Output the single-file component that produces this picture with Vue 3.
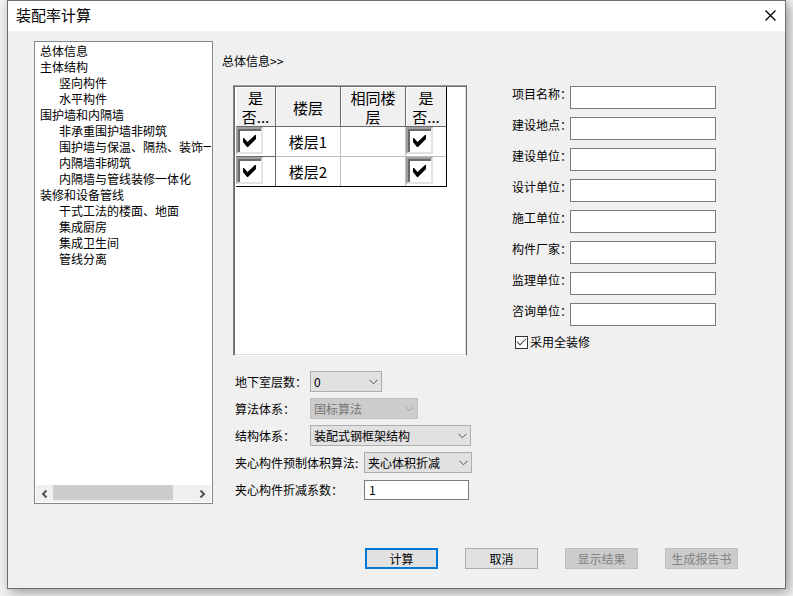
<script setup>
import { ref } from 'vue'

const tree = [
  { text: '总体信息', level: 0 },
  { text: '主体结构', level: 0 },
  { text: '竖向构件', level: 1 },
  { text: '水平构件', level: 1 },
  { text: '围护墙和内隔墙', level: 0 },
  { text: '非承重围护墙非砌筑', level: 1 },
  { text: '围护墙与保温、隔热、装饰一体化', level: 1 },
  { text: '内隔墙非砌筑', level: 1 },
  { text: '内隔墙与管线装修一体化', level: 1 },
  { text: '装修和设备管线', level: 0 },
  { text: '干式工法的楼面、地面', level: 1 },
  { text: '集成厨房', level: 1 },
  { text: '集成卫生间', level: 1 },
  { text: '管线分离', level: 1 },
]

const floors = ref([
  { name: '楼层1', same: '', first: true, second: true },
  { name: '楼层2', same: '', first: true, second: true },
])

const selects = [
  { id: 'basement', label: '地下室层数：', value: '0', size: 'small' },
  { id: 'method', label: '算法体系：', value: '国标算法', size: 'medium', disabled: true },
  { id: 'structure', label: '结构体系：', value: '装配式钢框架结构', size: 'large' },
  { id: 'volume', label: '夹心构件预制体积算法:', value: '夹心体积折减', size: 'medium', wide: true },
]

const factor = ref('1')

const fields = ref([
  { id: 'project', label: '项目名称：', value: '' },
  { id: 'place', label: '建设地点：', value: '' },
  { id: 'owner', label: '建设单位：', value: '' },
  { id: 'designer', label: '设计单位：', value: '' },
  { id: 'builder', label: '施工单位：', value: '' },
  { id: 'factory', label: '构件厂家：', value: '' },
  { id: 'supervisor', label: '监理单位：', value: '' },
  { id: 'consultant', label: '咨询单位：', value: '' },
])

const fullDecoration = ref(true)
</script>

<template>
  <div class="desktop">
    <main class="dialog">
      <header class="titlebar">
        <h1>装配率计算</h1>
        <button class="close" type="button" aria-label="关闭">
          <svg width="11" height="11" viewBox="0 0 11 11"><path d="M.5 .5 10.5 10.5M10.5 .5 .5 10.5" /></svg>
        </button>
      </header>

      <div class="content">
        <nav class="tree">
          <ul>
            <li v-for="item in tree" :key="item.text" :class="{ child: item.level }">{{ item.text }}</li>
          </ul>
          <div class="scrollbar">
            <button type="button" aria-label="向左">
              <svg width="7" height="8" viewBox="0 0 7 8"><path d="M5.5 .5 2 4 5.5 7.5" /></svg>
            </button>
            <div class="track"><div class="thumb"></div></div>
            <button type="button" aria-label="向右">
              <svg width="7" height="8" viewBox="0 0 7 8"><path d="M1.5 .5 5 4 1.5 7.5" /></svg>
            </button>
          </div>
        </nav>

        <section class="middle">
          <h2>总体信息&gt;&gt;</h2>
          <div class="sheet">
            <table>
              <colgroup><col class="c-check"><col class="c-name"><col class="c-name"><col class="c-check"></colgroup>
              <thead>
                <tr>
                  <th>是<br>否...</th>
                  <th>楼层</th>
                  <th>相同楼层</th>
                  <th>是<br>否...</th>
                </tr>
              </thead>
              <tbody>
                <tr v-for="floor in floors" :key="floor.name">
                  <td class="check fixed">
                    <label class="cellbox">
                      <input v-model="floor.first" type="checkbox" :aria-label="floor.name">
                      <svg v-if="floor.first" width="13" height="13" viewBox="0 0 13 13"><path d="M0 4v4l4 5h1l8-8V1h-1L4.5 8 1 4z" /></svg>
                    </label>
                  </td>
                  <td>{{ floor.name }}</td>
                  <td>{{ floor.same }}</td>
                  <td class="check">
                    <label class="cellbox">
                      <input v-model="floor.second" type="checkbox" :aria-label="floor.name">
                      <svg v-if="floor.second" width="13" height="13" viewBox="0 0 13 13"><path d="M0 4v4l4 5h1l8-8V1h-1L4.5 8 1 4z" /></svg>
                    </label>
                  </td>
                </tr>
              </tbody>
            </table>
          </div>

          <div class="options">
            <div v-for="s in selects" :key="s.id" class="option" :class="{ wide: s.wide }">
              <label :for="s.id">{{ s.label }}</label>
              <span class="combo" :class="[s.size, { disabled: s.disabled }]">
                <select :id="s.id" :disabled="s.disabled"><option>{{ s.value }}</option></select>
                <svg width="9" height="6" viewBox="0 0 9 6"><path d="M.5 .8 4.5 4.8 8.5 .8" /></svg>
              </span>
            </div>
            <div class="option wide">
              <label for="factor">夹心构件折减系数：</label>
              <input id="factor" v-model="factor" class="factor" type="text">
            </div>
          </div>
        </section>

        <section class="project">
          <div v-for="f in fields" :key="f.id" class="field">
            <label :for="f.id">{{ f.label }}</label>
            <input :id="f.id" v-model="f.value" type="text">
          </div>
          <label class="decoration">
            <input v-model="fullDecoration" type="checkbox">
            <span>采用全装修</span>
          </label>
        </section>
      </div>

      <footer class="actions">
        <button class="primary" type="button">计算</button>
        <button type="button">取消</button>
        <button type="button" disabled>显示结果</button>
        <button type="button" disabled>生成报告书</button>
      </footer>
    </main>
  </div>
</template>

<style>
body {
  background: #f4f4f4;
}
</style>

<style scoped>
.desktop {
  padding: 0 7px 7px;
  overflow: hidden;
  color: #000;
  font: 12px/16px "Noto Sans CJK SC", sans-serif;
}
.desktop *,
.desktop *::before {
  box-sizing: border-box;
}
button,
input,
select {
  margin: 0;
  padding: 0;
  color: inherit;
  font: inherit;
  border-radius: 0;
}
svg {
  display: block;
  fill: none;
  stroke: #000;
}
.dialog {
  border: 1px solid #6d6d6d;
  background: #f0f0f0;
  box-shadow: 3px 3px 12px rgba(0, 0, 0, 0.4);
}
.titlebar {
  display: flex;
  align-items: center;
  justify-content: space-between;
  height: 30px;
  padding: 0 9px 2px 8px;
  background: #fff;
}
h1 {
  margin: 0;
  font-size: 15px;
  font-weight: 400;
  line-height: 20px;
}
.close {
  border: 0;
  background: none;
}
.close path {
  stroke-width: 1.3;
}
.content {
  display: flex;
  align-items: flex-start;
  padding: 10px 69px 0 26px;
}
.tree {
  display: flex;
  flex: 0 0 179px;
  flex-direction: column;
  min-width: 0;
  min-height: 463px;
  padding: 1px;
  border: 1px solid #828790;
  background: #fff;
}
.tree ul {
  flex: 1;
  margin: 0;
  padding: 0;
  overflow: hidden;
  list-style: none;
  white-space: nowrap;
}
.tree li {
  padding-left: 4px;
}
.tree li.child {
  padding-left: 23px;
}
.scrollbar {
  display: flex;
  height: 17px;
  background: #f0f0f0;
}
.scrollbar button {
  display: grid;
  place-items: center;
  width: 17px;
  border: 0;
  background: none;
}
.scrollbar path {
  stroke: #505050;
  stroke-width: 2;
}
.track {
  flex: 1;
}
.thumb {
  width: 85%;
  height: 15px;
  background: #cdcdcd;
}
.middle {
  flex: 0 0 249px;
  margin-left: 9px;
}
h2 {
  margin: 12px 0 16px;
  font-size: 12px;
  font-weight: 400;
  line-height: 16px;
}
.sheet {
  width: 234px;
  min-height: 271px;
  margin-left: 11px;
  border: 1px solid;
  border-color: #a0a0a0 #696969 #fff #808080;
  background: #fff;
  box-shadow: inset 1px 1px #696969, inset -1px -1px #e3e3e3;
  padding: 1px 0 0 2px;
}
table {
  width: 210px;
  table-layout: fixed;
  border-spacing: 0;
  border-right: 1px solid #000;
  border-bottom: 1px solid #000;
  font-size: 15px;
  line-height: 19px;
}
.c-check {
  width: 40px;
}
.c-name {
  width: 65px;
}
th {
  height: 40px;
  padding: 1px 5px 0;
  border-right: 1px solid #696969;
  border-bottom: 1px solid #696969;
  background: #f0f0f0;
  box-shadow: inset 1px 1px #fff;
  font-weight: 400;
}
td {
  height: 30px;
  padding: 0;
  border-right: 1px solid #c0c0c0;
  border-bottom: 1px solid #c0c0c0;
  text-align: center;
  vertical-align: middle;
}
td.check {
  vertical-align: top;
}
td.fixed {
  border-color: #696969;
}
th:last-child,
td:last-child {
  border-right: 0;
}
tbody tr:last-child td {
  height: 29px;
  border-bottom: 0;
}
.cellbox {
  display: grid;
  place-items: center;
  position: relative;
  width: 27px;
  height: 27px;
  border: 2px solid;
  border-color: #a0a0a0 #e3e3e3 #e3e3e3 #a0a0a0;
  box-shadow: inset 2px 2px #696969;
}
.cellbox input {
  position: absolute;
  inset: 0;
  width: 100%;
  height: 100%;
  opacity: 0;
}
.cellbox path {
  fill: #000;
  stroke: none;
}
.options {
  display: grid;
  gap: 6px;
  margin: 15px 0 0 13px;
}
.option {
  display: flex;
  align-items: center;
  height: 21px;
}
.option label {
  flex: 0 0 75px;
  white-space: nowrap;
}
.option.wide label {
  flex-basis: 129px;
}
.combo {
  display: flex;
  align-items: center;
  position: relative;
}
.small {
  width: 72px;
}
.medium {
  width: 108px;
}
.large {
  width: 161px;
}
.combo select {
  width: 100%;
  height: 21px;
  padding: 0 3px;
  border: 1px solid #adadad;
  background: #e1e1e1;
  appearance: none;
}
.combo svg {
  position: absolute;
  right: 4px;
  pointer-events: none;
}
.combo path {
  stroke: #505050;
}
.combo.disabled select {
  border-color: #bfbfbf;
  background: #ccc;
  color: #777;
  opacity: 1;
}
.combo.disabled path {
  stroke: #a0a0a0;
}
.factor {
  width: 105px;
  height: 20px;
  padding: 0 4px;
  border: 1px solid #7a7a7a;
  background: #fff;
}
.project {
  display: grid;
  flex: 1;
  gap: 8px;
  min-width: 0;
  margin: 45px 0 0 40px;
}
.field {
  display: flex;
}
.field label {
  flex: 0 0 58px;
  min-width: 0;
  white-space: nowrap;
}
.field input {
  flex: 1;
  min-width: 0;
  height: 23px;
  padding: 0 4px;
  border: 1px solid #7a7a7a;
  background: #fff;
}
.decoration {
  display: flex;
  align-items: center;
  gap: 2px;
  padding-left: 3px;
}
.decoration input {
  width: 13px;
  height: 13px;
  border: 1px solid #333;
  background: #fff;
  appearance: none;
}
.decoration input:checked::before {
  display: block;
  width: 9px;
  height: 5px;
  margin: 1px;
  border: solid #444;
  border-width: 0 0 1px 1px;
  content: "";
  transform: rotate(-45deg);
}
.actions {
  display: flex;
  justify-content: flex-end;
  gap: 27px;
  padding: 44px 47px 19px;
}
.actions button {
  width: 73px;
  height: 21px;
  border: 1px solid #adadad;
  background: #e1e1e1;
  white-space: nowrap;
}
.actions .primary {
  border: 2px solid #0078d7;
}
.actions button:disabled {
  border-color: #bfbfbf;
  background: #ccc;
  color: #838383;
}
</style>
